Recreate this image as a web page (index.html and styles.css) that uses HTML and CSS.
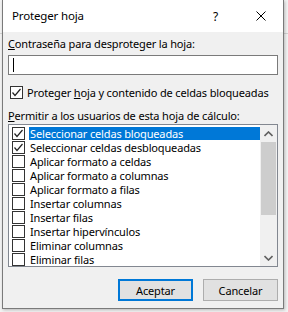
FILE: index.html
```html
<!DOCTYPE html>
<html lang="es">
<head>
  <meta charset="UTF-8" />
  <title>Proteger hoja</title>
  <link rel="stylesheet" href="styles.css">
</head>
<body>
  <div class="dialog">
    <div class="titlebar">
      <span class="title">Proteger hoja</span>
      <span class="help">?</span>
      <svg class="close" width="10" height="10" viewBox="0 0 10 10">
        <path d="M0.5 0.5 L9.5 9.5 M9.5 0.5 L0.5 9.5" stroke="#000" stroke-width="1" fill="none"/>
      </svg>
    </div>

    <div class="content">
      <div class="label"><u>C</u>ontraseña para desproteger la hoja:</div>
      <div class="input"><span class="caret"></span></div>

      <div class="check-row">
        <span class="cb"><svg width="11" height="11" viewBox="0 0 11 11"><path d="M1.5 5.5 L4 8.5 L9.5 2" stroke="#222" stroke-width="1.2" fill="none"/></svg></span>
        <span>Proteger <u>h</u>oja y contenido de celdas bloqueadas</span>
      </div>

      <div class="label label-list"><u>P</u>ermitir a los usuarios de esta hoja de cálculo:</div>
      <div class="list">
        <div class="items">
          <div class="item selected">
            <span class="cb"><svg width="11" height="11" viewBox="0 0 11 11"><path d="M1.5 5.5 L4 8.5 L9.5 2" stroke="#222" stroke-width="1.2" fill="none"/></svg></span>
            <span class="item-text">Seleccionar celdas bloqueadas</span>
          </div>
          <div class="item">
            <span class="cb"><svg width="11" height="11" viewBox="0 0 11 11"><path d="M1.5 5.5 L4 8.5 L9.5 2" stroke="#222" stroke-width="1.2" fill="none"/></svg></span>
            <span class="item-text">Seleccionar celdas desbloqueadas</span>
          </div>
          <div class="item"><span class="cb"></span><span class="item-text">Aplicar formato a celdas</span></div>
          <div class="item"><span class="cb"></span><span class="item-text">Aplicar formato a columnas</span></div>
          <div class="item"><span class="cb"></span><span class="item-text">Aplicar formato a filas</span></div>
          <div class="item"><span class="cb"></span><span class="item-text">Insertar columnas</span></div>
          <div class="item"><span class="cb"></span><span class="item-text">Insertar filas</span></div>
          <div class="item"><span class="cb"></span><span class="item-text">Insertar hipervínculos</span></div>
          <div class="item"><span class="cb"></span><span class="item-text">Eliminar columnas</span></div>
          <div class="item"><span class="cb"></span><span class="item-text">Eliminar filas</span></div>
        </div>
        <div class="scrollbar">
          <div class="arrow">
            <svg width="9" height="6" viewBox="0 0 9 6"><path d="M0.5 5 L4.5 1 L8.5 5" stroke="#606060" stroke-width="1.6" fill="none"/></svg>
          </div>
          <div class="thumb"></div>
          <div class="track"></div>
          <div class="arrow">
            <svg width="9" height="6" viewBox="0 0 9 6"><path d="M0.5 1 L4.5 5 L8.5 1" stroke="#606060" stroke-width="1.6" fill="none"/></svg>
          </div>
        </div>
      </div>

      <div class="buttons">
        <button class="btn btn-default">Aceptar</button>
        <button class="btn">Cancelar</button>
      </div>
    </div>
  </div>
</body>
</html>
```

FILE: styles.css
```css
* { margin: 0; padding: 0; box-sizing: border-box; }
body {
  width: 288px;
  height: 312px;
  overflow: hidden;
  background-color: #f3f3f3;
  background-image:
    linear-gradient(#d4d4d4, #d4d4d4);
  background-size: 288px 1px;
  background-position: 0 33px;
  background-repeat: no-repeat;
  font-family: 'Noto Sans', sans-serif;
  font-size: 11px;
  letter-spacing: -0.15px;
  color: #000;
}

.dialog {
  margin-left: 2px;
  width: 282px;
  height: 309px;
  border: 1px solid #7a7a7a;
  border-top: none;
  background-color: #f0f0f0;
  box-shadow: 1px 1px 3px rgba(0, 0, 0, 0.25);
  display: flex;
  flex-direction: column;
}

.titlebar {
  height: 32px;
  background-color: #fff;
  display: flex;
  align-items: center;
  padding-left: 9px;
}
.title { flex: 1; font-size: 11.5px; padding-bottom: 1px; }
.help { font-size: 12px; margin-right: 38px; }
.close { margin-right: 17px; }

.content {
  flex: 1;
  padding: 4px 5px 0;
  display: flex;
  flex-direction: column;
}

.label { line-height: 16px; white-space: nowrap; }
.label-list { margin-top: 8px; }

.input {
  margin-top: 3px;
  height: 20px;
  background-color: #fff;
  border: 1px solid #7a7a7a;
  padding: 2px 4px;
}
.caret {
  display: block;
  width: 1px;
  height: 14px;
  background-color: #000;
}

.check-row {
  margin-top: 9px;
  display: flex;
  align-items: center;
  height: 16px;
  padding-left: 2px;
  white-space: nowrap;
}

.cb {
  width: 13px;
  height: 13px;
  flex: none;
  border: 1px solid #333;
  background-color: #fff;
  margin-right: 4px;
  display: flex;
  align-items: center;
  justify-content: center;
}

.list {
  height: 143px;
  border: 1px solid #828790;
  background-color: #fff;
  display: flex;
}
.items { flex: 1; padding-top: 1px; }
.item {
  height: 14px;
  display: flex;
  align-items: center;
  padding-left: 3px;
}
.item-text { flex: 1; line-height: 13px; padding-left: 1px; white-space: nowrap; }
.item.selected .item-text { background-color: #0078d7; color: #fff; }

.scrollbar {
  width: 17px;
  background-color: #f0f0f0;
  display: flex;
  flex-direction: column;
}
.arrow {
  height: 17px;
  display: flex;
  align-items: center;
  justify-content: center;
}
.thumb {
  height: 73px;
  margin: 0 1px;
  background-color: #cdcdcd;
}
.track { flex: 1; }

.buttons {
  margin-top: 12px;
  display: flex;
  justify-content: flex-end;
  gap: 10px;
}
.btn {
  width: 75px;
  height: 22px;
  font-family: 'Noto Sans', sans-serif;
  font-size: 11px;
  letter-spacing: -0.15px;
  background-color: #e1e1e1;
  border: 1px solid #adadad;
  color: #000;
}
.btn-default {
  border: 2px solid #0078d7;
}
```
